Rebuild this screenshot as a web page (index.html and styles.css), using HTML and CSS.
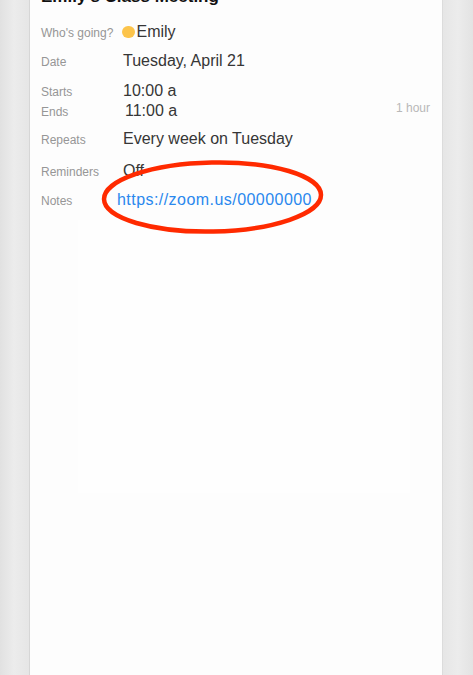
FILE: index.html
```html
<!DOCTYPE html>
<html lang="en">
<head>
	<meta charset="UTF-8">
	<title>Emily's Class Meeting</title>
	<link rel="stylesheet" href="styles.css">
</head>
<body>
	<div class="card">
		<h1 class="title">Emily's Class Meeting</h1>
		<div class="row r-who">
			<span class="label">Who's going?</span>
			<span class="value"><span class="dot"></span>Emily</span>
		</div>
		<div class="row r-date">
			<span class="label">Date</span>
			<span class="value">Tuesday, April 21</span>
		</div>
		<div class="row r-starts">
			<span class="label">Starts</span>
			<span class="value">10:00 a</span>
		</div>
		<div class="row r-ends">
			<span class="label">Ends</span>
			<span class="value ends">11:00 a</span>
			<span class="duration">1 hour</span>
		</div>
		<div class="row r-repeats">
			<span class="label">Repeats</span>
			<span class="value">Every week on Tuesday</span>
		</div>
		<div class="row r-reminders">
			<span class="label">Reminders</span>
			<span class="value">Off</span>
		</div>
		<div class="row r-notes">
			<span class="label">Notes</span>
			<a class="value link" href="#">https://zoom.us/00000000</a>
		</div>
		<div class="blank"></div>

		<!-- red marker round the link -->
		<svg class="mark" width="224" height="76" viewBox="0 0 224 76">
			<ellipse cx="111.5" cy="37" rx="108.5" ry="34.5" fill="none" stroke="#ff2a00" stroke-width="4.5" transform="rotate(-1.2 111.5 37)" />
		</svg>
	</div>
</body>
</html>
```

FILE: styles.css
```css
html, body {
	margin: 0;
	height: 100%;
}
body {
	background: linear-gradient(to right, #e1e1e1 0, #ececec 14px, #e6e6e6 28px, #e6e6e6 443px, #ececec 458px, #e3e3e3 473px);
	font-family: "Liberation Sans", Arial, sans-serif;
	overflow: hidden;
}
.card {
	display: flow-root;
	position: relative;
	margin-left: 29px;
	width: 389px;
	height: 100%;
	background-color: #fdfdfd;
	border-left: 1px solid #d6d6d6;
	border-right: 1px solid #dcdcdc;
	padding: 0 12px 0 11px;
}
.title {
	margin: -13px 0 14.5px;
	font-size: 17px;
	line-height: 20px;
	font-weight: bold;
	color: #111;
}
.row {
	display: flex;
	align-items: baseline;
	line-height: 20px;
}
.label {
	width: 82px;
	flex: none;
	font-size: 12px;
	color: #969696;
}
.value {
	font-size: 16px;
	color: #363636;
}
.dot {
	display: inline-block;
	width: 12.5px;
	height: 12.5px;
	border-radius: 50%;
	background-color: #fcc44b;
	vertical-align: -1.5px;
	margin: 0 2px 0 -1px;
}
.ends {
	padding-left: 2px;
}
.duration {
	margin-left: auto;
	align-self: flex-start;
	margin-top: -3px;
	font-size: 12px;
	color: #b8b8b8;
}
.link {
	color: #2a88ee;
	text-decoration: none;
	letter-spacing: 0.45px;
	margin-left: -6px;
}
.r-who { height: 29px; }
.r-date { height: 30px; }
.r-starts { height: 20px; }
.r-ends { height: 28px; }
.r-repeats { height: 32px; }
.r-reminders { height: 29px; }
.r-notes { height: 20px; }
.blank {
	margin: 10.5px 0 0 37px;
	width: 332px;
	height: 273px;
	background-color: #fefefe;
}
.mark {
	position: absolute;
	left: 71px;
	top: 160px;
}
```
